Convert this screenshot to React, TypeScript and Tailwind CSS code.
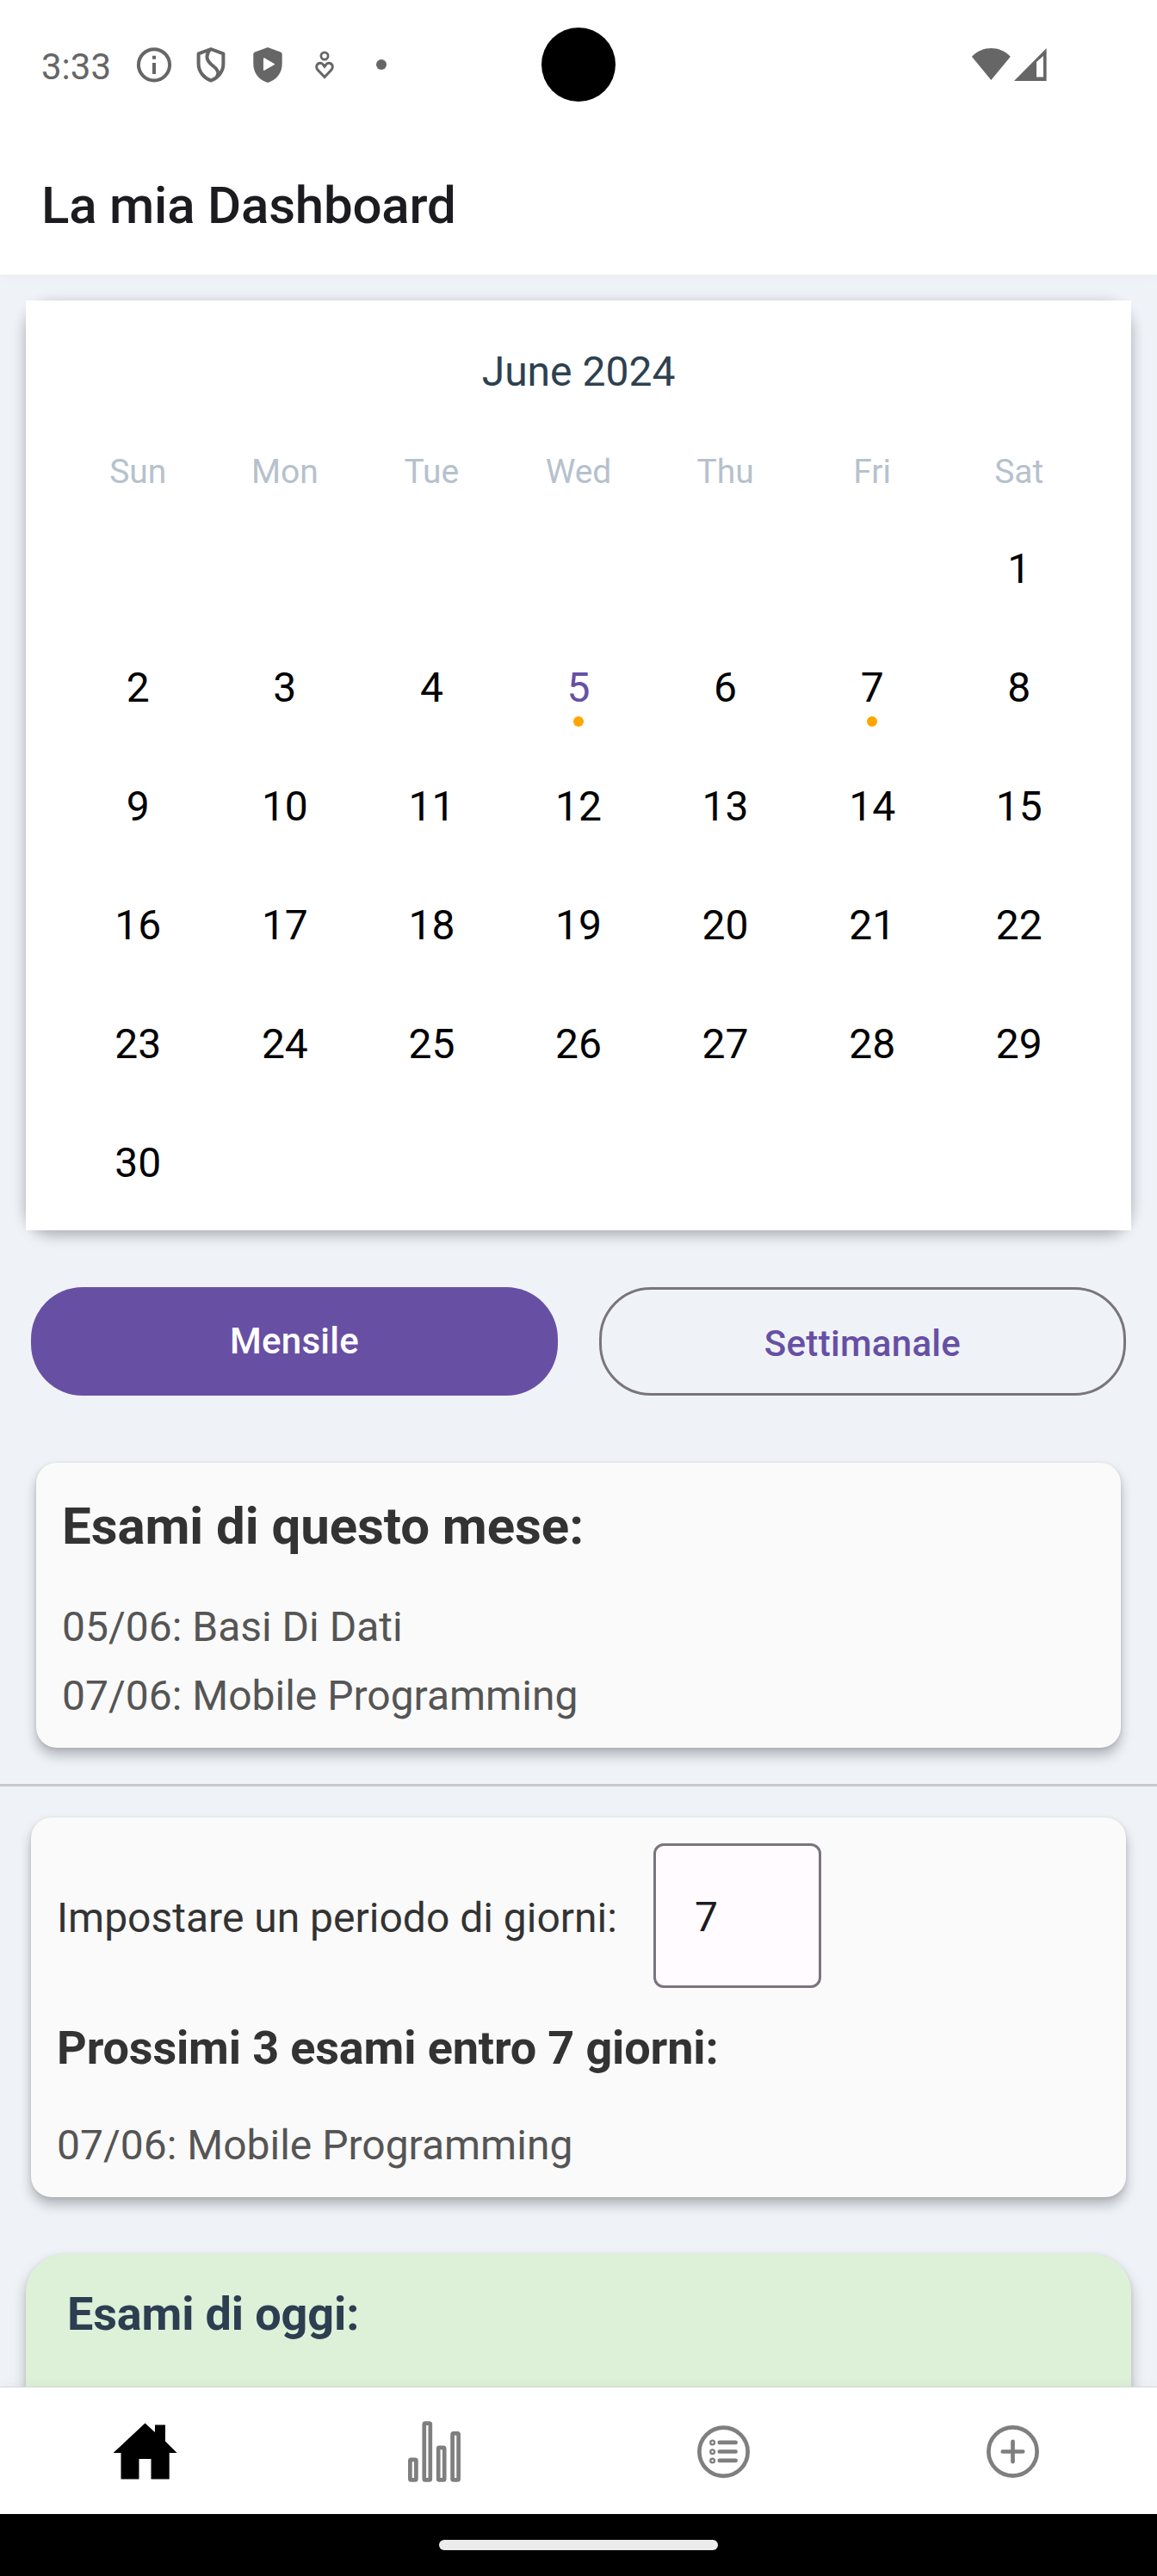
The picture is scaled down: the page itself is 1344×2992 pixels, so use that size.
import type { ReactNode } from "react";
import { IoAddCircleOutline, IoListCircleOutline, IoStatsChartOutline } from "react-icons/io5";

const WEEKDAYS = ["Sun", "Mon", "Tue", "Wed", "Thu", "Fri", "Sat"];
const LEADING_BLANKS = 6;
const DAYS = Array.from({ length: 30 }, (_, i) => i + 1);
const TODAY = 5;
const EXAM_DAYS = [5, 7];

function StatusIcon({ children }: { children: ReactNode }) {
  return (
    <svg width="66" height="66" viewBox="-33 -33 66 66" fill="none" stroke="#666" strokeWidth="4">
      {children}
    </svg>
  );
}

function StatusBar() {
  return (
    <div className="relative z-20 flex h-[150px] shrink-0 items-center bg-white pl-12">
      <span className="w-[98px] pt-[5px] text-[42px] leading-[56px] text-[#666]">3:33</span>
      <StatusIcon>
        <circle r="18.1" cy="0.3" />
        <path d="M-2 -10.2h4v4h-4z M-2 -2h4v13h-4z" fill="#666" stroke="none" />
      </StatusIcon>
      <StatusIcon>
        <path d="M0 -18 L14.4 -12.6 V-1 C14.4 8.5 8 15.6 0 18.6 C-8 15.6 -14.4 8.5 -14.4 -1 V-12.6 Z" strokeLinejoin="round" />
        <path d="M-1 -17.5 C-8 -9 -3.5 -3 3 2 C9 6.5 9.5 10 6.5 15" />
      </StatusIcon>
      <StatusIcon>
        <path d="M0 -20 L15 -14.6 Q16.7 -14 16.7 -12 V-1 C16.7 10 10.5 17.5 0 21 C-10.5 17.5 -16.7 10 -16.7 -1 V-12 Q-16.7 -14 -15 -14.6 Z" fill="#666" stroke="none" />
        <path d="M-4.3 -7 V6.2 L7.2 -0.4 Z" fill="#fff" stroke="#fff" strokeWidth="1.5" strokeLinejoin="round" />
      </StatusIcon>
      <StatusIcon>
        <circle cy="-10" r="4.1" strokeWidth="2.8" />
        <path d="M0 14.6 L-7.8 6.2 C-12.5 0.5 -5 -4.6 -1.7 0 L0 2.2 L1.7 0 C5 -4.6 12.5 0.5 7.8 6.2 Z" strokeWidth="3" />
      </StatusIcon>
      <StatusIcon>
        <circle r="6" fill="#666" stroke="none" />
      </StatusIcon>
      <div className="absolute left-[629px] top-8 size-[86px] rounded-full bg-black" />
      <svg className="ml-auto mr-32" width="88" height="40" viewBox="0 0 88 40" fill="#666">
        <path d="M0.9 10.7 C13 -2.3 33.7 -2.3 45.8 10.7 L23.3 38 Z" />
        <path fillRule="evenodd" d="M50 39 L87.6 1 V39 Z M76 17 V34.5 H84 V10 Z" />
      </svg>
    </div>
  );
}

function Calendar() {
  return (
    <section className="mx-[30px] mt-[30px] rounded-[30px] shadow-[0_6px_16px_rgba(0,0,0,0.26),0_0_18px_rgba(0,0,0,0.06)]">
      <div className="bg-white px-[45px] pb-[9px] pt-[55px]">
        <h2 className="text-center text-[48px] leading-[56px] text-[#2d4150]">June 2024</h2>
        <div className="mt-[65px] grid grid-cols-7 text-center text-[39px] leading-[46px] text-[#b6c1cd]">
          {WEEKDAYS.map((day) => (
            <span key={day}>{day}</span>
          ))}
        </div>
        <div className="mt-[21px] grid grid-cols-7 text-center text-[48px] leading-[138px] text-black">
          {Array.from({ length: LEADING_BLANKS }, (_, i) => (
            <span key={`blank-${i}`} />
          ))}
          {DAYS.map((day) => (
            <span key={day} className={day === TODAY ? "relative text-[#6750a4]" : "relative"}>
              {day}
              {EXAM_DAYS.includes(day) && (
                <i className="absolute left-1/2 top-[102px] size-3 -translate-x-1/2 rounded-full bg-[#ffa500]" />
              )}
            </span>
          ))}
        </div>
      </div>
    </section>
  );
}

const CARD_SHADOW = "shadow-[0_9px_14px_rgba(0,0,0,0.25),0_1px_5px_rgba(0,0,0,0.10)]";

function MonthCard() {
  return (
    <section className={`mx-[42px] mt-[78px] h-[331px] rounded-[24px] bg-[#fafafa] p-[30px] ${CARD_SHADOW}`}>
      <h2 className="text-[60px] font-bold leading-[87px] tracking-[-0.07px] text-[#333]">
        Esami di questo mese:
      </h2>
      <ul className="mt-[34px] text-[48px] leading-[80px] text-[#555]">
        <li>05/06: Basi Di Dati</li>
        <li>07/06: Mobile Programming</li>
      </ul>
    </section>
  );
}

function UpcomingCard() {
  return (
    <section className={`mx-9 mt-9 h-[441px] rounded-[24px] bg-[#fafafa] p-[30px] ${CARD_SHADOW}`}>
      <div className="flex h-[168px] items-center">
        <span className="w-[693px] pt-[5px] text-[48px] leading-[56px] text-[#333]">
          Impostare un periodo di giorni:
        </span>
        <div className="flex h-[168px] w-[195px] items-center rounded-[12px] border-[3px] border-[#79747e] bg-[#fffbfe] pl-[45px] pt-[3px] text-[48px] leading-[56px] text-[#1c1b1f]">
          7
        </div>
      </div>
      <h2 className="mt-[34px] text-[54px] font-bold leading-[72px] tracking-[-0.15px] text-[#333]">
        Prossimi 3 esami entro 7 giorni:
      </h2>
      <p className="mt-[37px] text-[48px] leading-[80px] text-[#555]">07/06: Mobile Programming</p>
    </section>
  );
}

function HomeIcon() {
  return (
    <svg width="76" height="76" viewBox="0 0 76 76" fill="#000">
      <path d="M38.5 5.5 L50 16 V7.5 H62 V26.5 L75.6 40 H66.7 V70.5 H45.5 V47 H31.5 V70.5 H10.5 V40 H1.6 Z" />
    </svg>
  );
}

export default function App() {
  return (
    <div className="flex h-[2992px] w-[1344px] flex-col overflow-hidden bg-[#eff3f8] font-[Roboto,sans-serif]">
      <StatusBar />
      <header className="z-10 flex h-[169px] shrink-0 items-center bg-white pl-12 pt-2 shadow-[0_0_16px_rgba(0,0,0,0.04)]">
        <h1 className="text-[60px] font-medium leading-[84px] tracking-[-0.2px] text-[#1c1b1f]">
          La mia Dashboard
        </h1>
      </header>

      <main className="min-h-0 flex-1 overflow-hidden">
        <Calendar />
        <div className="mx-9 mt-[66px] grid grid-cols-2 gap-12 text-[42px] font-medium leading-[60px] tracking-[0.3px]">
          <button className="flex h-[126px] items-center justify-center rounded-[60px] bg-[#6750a4] text-white">
            Mensile
          </button>
          <button className="flex h-[126px] items-center justify-center rounded-[60px] border-[3px] border-[#79747e] pt-[5px] text-[#6750a4]">
            Settimanale
          </button>
        </div>
        <MonthCard />
        <div className="mt-[42px] h-[3px] bg-[#cac4d0]" />
        <UpcomingCard />
        <section className="mx-[30px] mt-[66px] h-[300px] rounded-[45px] bg-[#ddf0d8] pl-12 pt-[34px] shadow-[0_9px_16px_rgba(0,0,0,0.25),0_1px_5px_rgba(0,0,0,0.08)]">
          <h2 className="text-[54px] font-bold leading-[72px] tracking-[-0.15px] text-[#2c3e50]">
            Esami di oggi:
          </h2>
        </section>
      </main>

      <nav className="z-10 grid h-[148px] shrink-0 grid-cols-4 place-items-center border-t border-[#d8d8d8] bg-white pt-px text-[#7f7f7f] shadow-[0_0_14px_rgba(0,0,0,0.05)]">
        <HomeIcon />
        <IoStatsChartOutline size={75} />
        <IoListCircleOutline size={75} />
        <IoAddCircleOutline size={75} />
      </nav>
      <div className="z-10 flex h-[72px] shrink-0 items-center justify-center bg-black">
        <div className="h-3 w-[324px] rounded-full bg-[#ececec]" />
      </div>
    </div>
  );
}
